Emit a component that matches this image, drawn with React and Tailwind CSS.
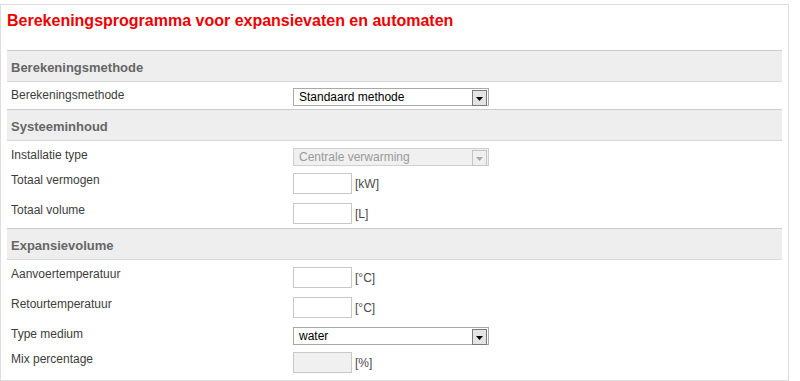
const font = { fontFamily: '"Liberation Sans", Arial, sans-serif' };

function Arrow({ disabled }) {
  return (
    <span
      className={`absolute right-[1px] top-[1px] flex h-[16px] w-[15px] items-center justify-center border ${
        disabled ? 'border-[#c4c4c4] bg-[#efefef]' : 'border-[#7a7a7a] bg-[#e4e4e4]'
      }`}
    >
      <svg width="7" height="4" viewBox="0 0 7 4" className="mt-[2px]">
        <path d="M0 0h7L3.5 4z" fill={disabled ? '#a8a8a8' : '#000'} />
      </svg>
    </span>
  );
}

function Select({ value, disabled }) {
  return (
    <div
      className={`relative h-[18px] w-[196px] border pl-[5px] text-[12px] leading-[16px] ${
        disabled ? 'border-[#cfcfcf] bg-[#f0f0f0] text-[#9a9a9a]' : 'border-[#a9a9a9] bg-white text-black'
      }`}
    >
      {value}
      <Arrow disabled={disabled} />
    </div>
  );
}

function Input({ unit, disabled }) {
  return (
    <div className="flex items-center gap-[3px]">
      <div className={`h-[21px] w-[59px] border border-[#c8c8c8] ${disabled ? 'bg-[#f0f0f0]' : 'bg-white'}`} />
      <span className="text-[12px] leading-[14px] text-[#4a4a4a]">{unit}</span>
    </div>
  );
}

function Row({ label, h, pt, children }) {
  return (
    <div className="flex items-start" style={{ height: h, paddingTop: pt }}>
      <div className="w-[286px] pl-[4px] text-[12px] leading-[14px] text-[#3c3c3c]">{label}</div>
      {children}
    </div>
  );
}

function Header({ children }) {
  return (
    <div className="box-border h-[32px] border-t border-b border-t-[#cccccc] border-b-[#d8d8d8] bg-[#eeeeee] pl-[4px] pt-[9px] text-[13px] font-bold leading-[16px] text-[#666666]">
      {children}
    </div>
  );
}

export default function App() {
  return (
    <div className="h-[381px] w-[800px] bg-white pt-[4px]" style={font}>
      <div className="box-border h-[377px] w-[789px] border border-[#dddddd] px-[6px]">
        <h1 className="pt-[7px] text-[16px] font-bold leading-[18px] text-[#ee0000]">
          Berekeningsprogramma voor expansievaten en automaten
        </h1>

        <div className="mt-[20px]">
          <Header>Berekeningsmethode</Header>
          <Row label="Berekeningsmethode" h={27} pt={6}>
            <Select value="Standaard methode" />
          </Row>

          <Header>Systeeminhoud</Header>
          <Row label="Installatie type" h={29} pt={7}>
            <Select value="Centrale verwarming" disabled />
          </Row>
          <Row label="Totaal vermogen" h={30} pt={3}>
            <Input unit="[kW]" />
          </Row>
          <Row label="Totaal volume" h={28} pt={3}>
            <Input unit="[L]" />
          </Row>

          <Header>Expansievolume</Header>
          <Row label="Aanvoertemperatuur" h={32} pt={7}>
            <Input unit="[°C]" />
          </Row>
          <Row label="Retourtemperatuur" h={30} pt={5}>
            <Input unit="[°C]" />
          </Row>
          <Row label="Type medium" h={27} pt={5}>
            <Select value="water" />
          </Row>
          <Row label="Mix percentage" h={30} pt={3}>
            <Input unit="[%]" disabled />
          </Row>
        </div>
      </div>
    </div>
  );
}
